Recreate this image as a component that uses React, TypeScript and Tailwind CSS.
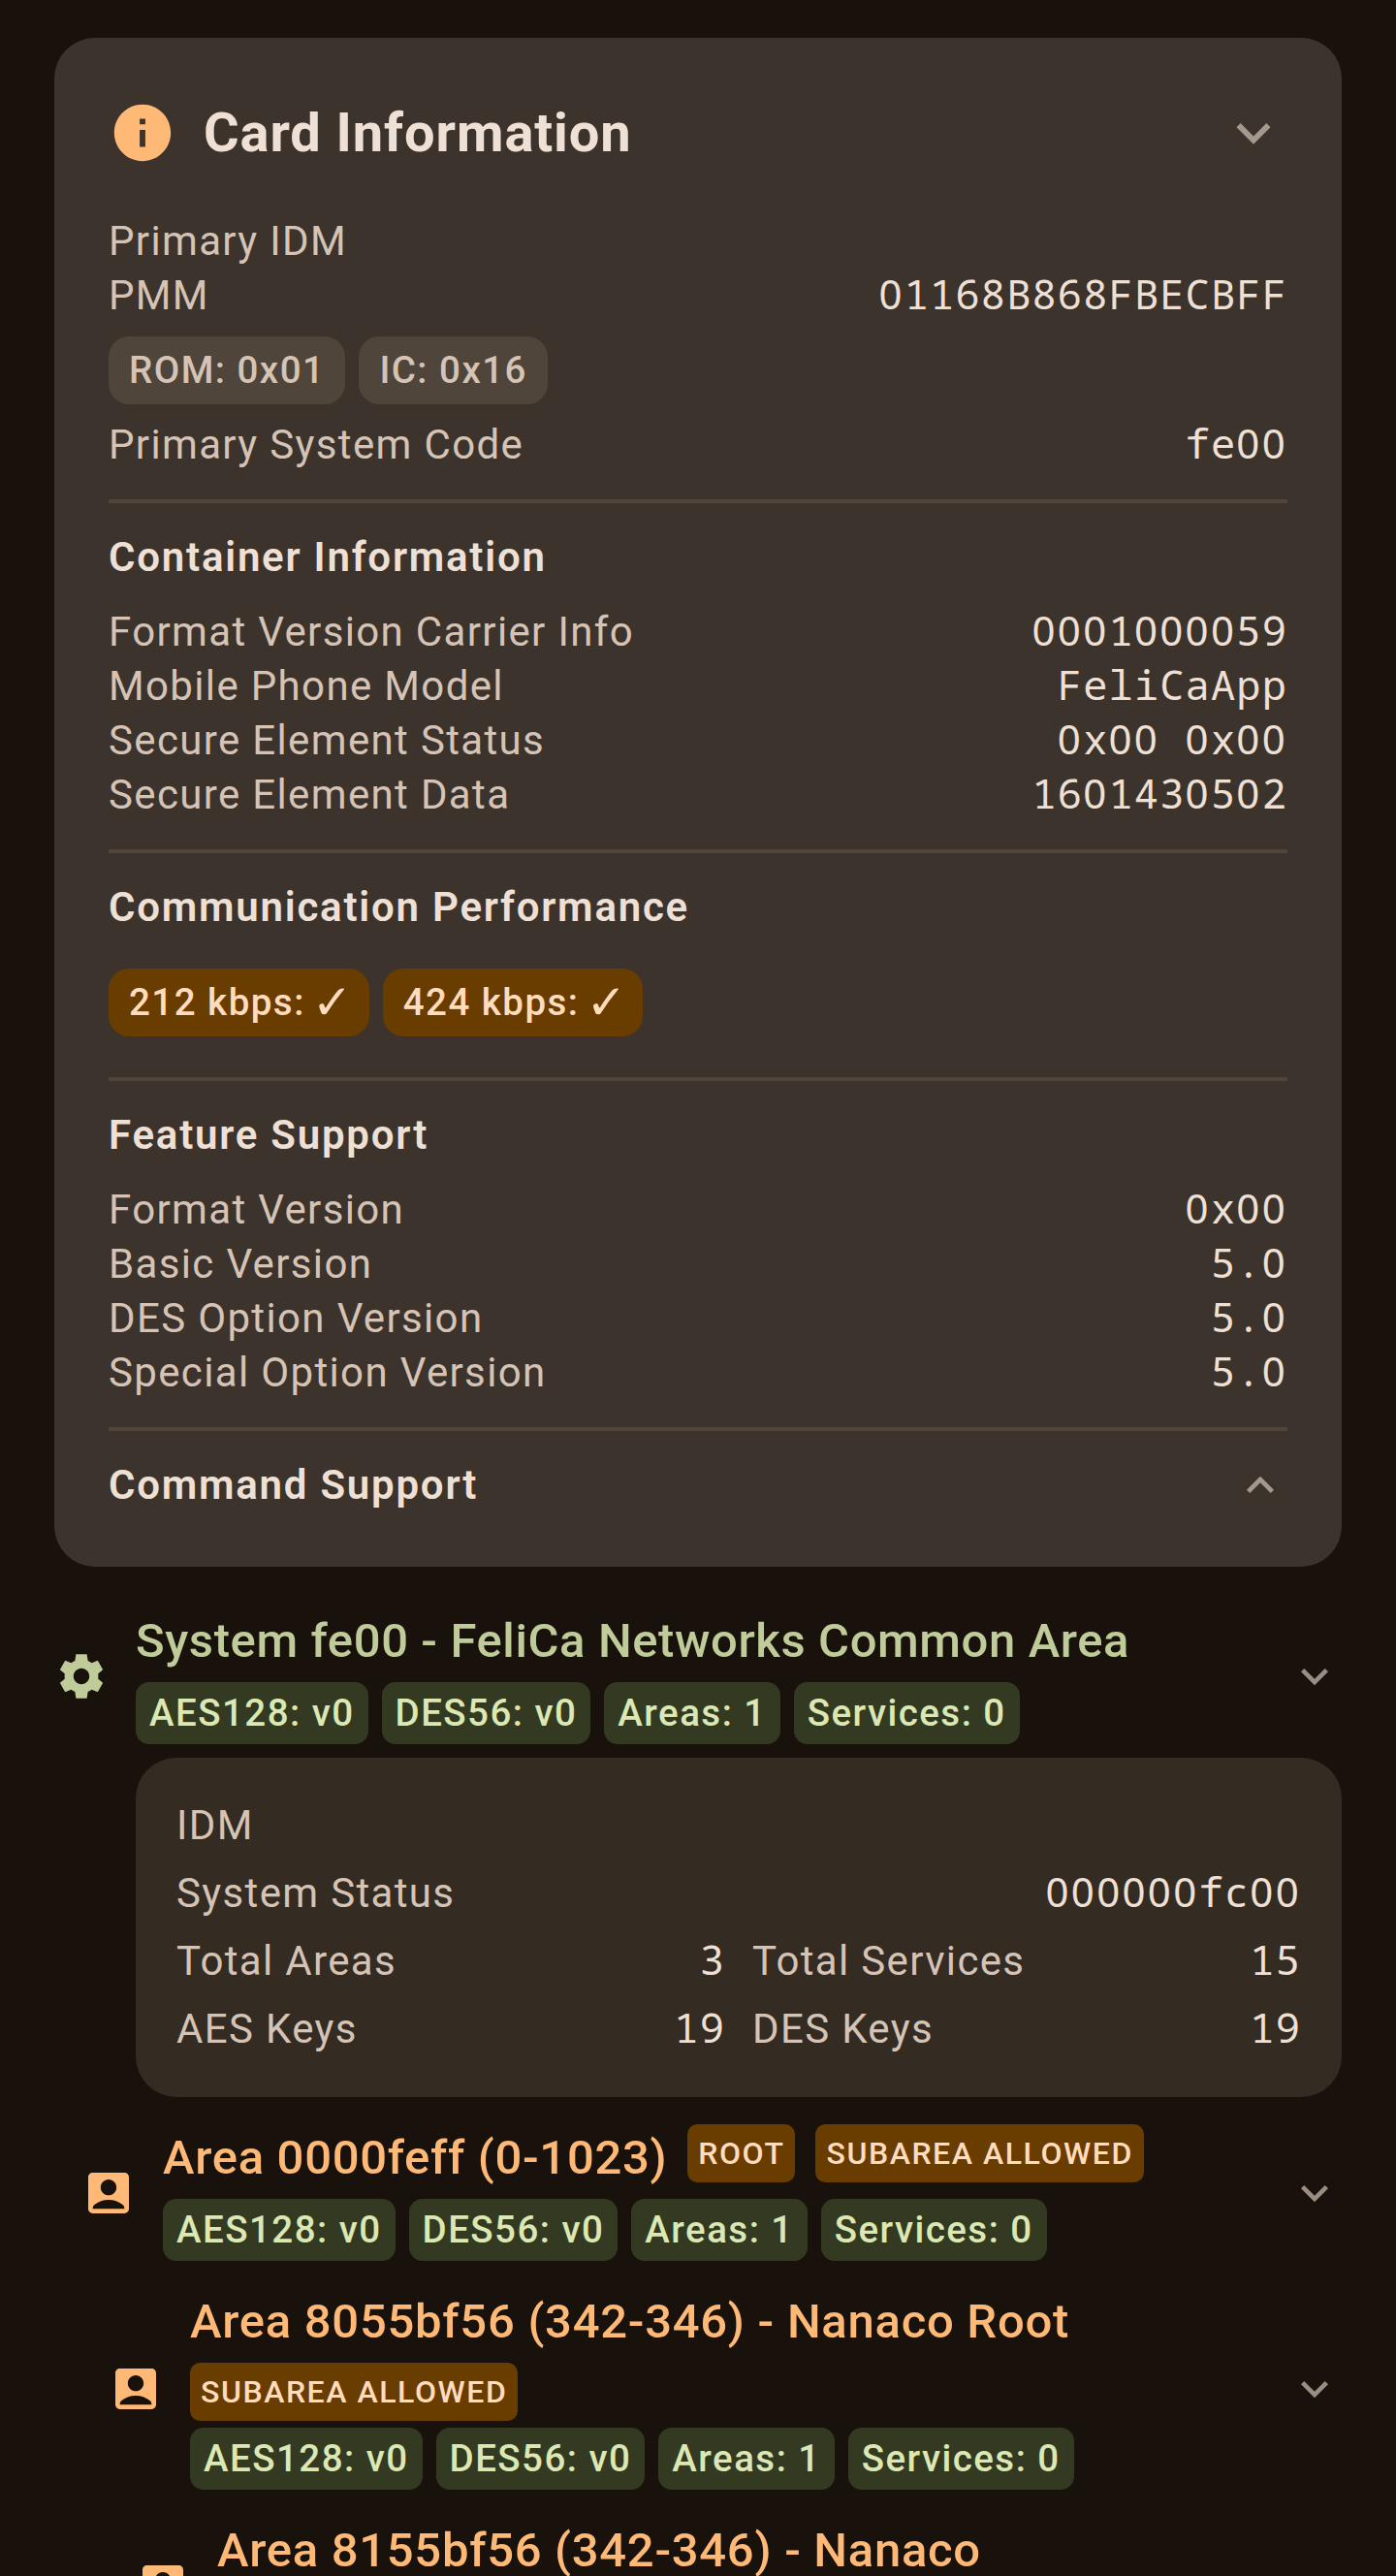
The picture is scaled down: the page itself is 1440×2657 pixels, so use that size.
import React from "react";
import { ReactNode } from "react";

type IconProps = { className: string; d: string };

const ICONS = {
  info: "M12 2C6.48 2 2 6.48 2 12s4.48 10 10 10 10-4.48 10-10S17.52 2 12 2zm1 15h-2v-6h2v6zm0-8h-2V7h2v2z",
  down: "M16.59 8.59 12 13.17 7.41 8.59 6 10l6 6 6-6z",
  up: "M12 8l-6 6 1.41 1.41L12 10.83l4.59 4.58L18 14z",
  gear: "M9.6 2.2h4.8l.45 2.9q.85.4 1.65 1l2.7-1.1 2.3 4.1-2.1 1.7q.1 1.2 0 2.4l2.1 1.7-2.3 4.1-2.7-1.1q-.8.6-1.65 1l-.45 2.9H9.6l-.45-2.9q-.85-.4-1.65-1l-2.7 1.1-2.3-4.1 2.1-1.7q-.1-1.2 0-2.4L2.5 9.1 4.8 5l2.7 1.1q.8-.6 1.65-1zM12 15.5c1.93 0 3.5-1.57 3.5-3.5S13.93 8.5 12 8.5 8.5 10.07 8.5 12s1.57 3.5 3.5 3.5z",
  person:
    "M19 3H5c-1.11 0-2 .9-2 2v14c0 1.1.89 2 2 2h14c1.1 0 2-.9 2-2V5c0-1.1-.9-2-2-2zm-7 3c1.93 0 3.5 1.57 3.5 3.5S13.93 13 12 13s-3.5-1.57-3.5-3.5S10.07 6 12 6zm7 13H5v-.23c0-.62.28-1.2.76-1.58C7.47 15.82 9.64 15 12 15s4.53.82 6.24 2.19c.48.38.76.97.76 1.58V19z",
};

function Icon({ className, d }: IconProps) {
  return (
    <svg viewBox="0 0 24 24" className={`shrink-0 ${className}`} fill="currentColor" fillRule="evenodd">
      <path d={d} />
    </svg>
  );
}

/* Monospaced value; zeros use the proportional face so that they stay unslashed. */
function Value({ text }: { text: string }) {
  return (
    <span className="whitespace-pre text-[42px] leading-[52px] tracking-[1.15px] text-[#EFE0D5] [font-family:'Noto_Sans_Mono',monospace]">
      {text.split(/(0+)/).map((run, i) =>
        run.startsWith("0") ? (
          <span key={i} className="tracking-[2.33px] [font-family:'Noto_Sans',sans-serif]">
            {run}
          </span>
        ) : (
          run
        ),
      )}
    </span>
  );
}

function Row({ label, value }: { label: string; value?: string }) {
  return (
    <div className="flex h-[56px] flex-1 items-baseline justify-between">
      <span className="text-[42px] leading-[56px] tracking-[1.35px] text-[#D5C3B5]">{label}</span>
      {value && <Value text={value} />}
    </div>
  );
}

function Divider({ className }: { className: string }) {
  return <div className={`h-[4px] bg-[#4F453A] ${className}`} />;
}

function Heading({ children }: { children: ReactNode }) {
  return (
    <h3 className="text-[42px] font-semibold leading-[56px] tracking-[1.77px] text-[#EFE0D5]">{children}</h3>
  );
}

function InfoChip({ tone, children }: { tone: string; children: ReactNode }) {
  return (
    <span
      className={`h-[70px] whitespace-pre rounded-[21px] px-[21px] pt-[7px] text-[38.5px] font-medium leading-[56px] tracking-[1.47px] ${tone}`}
    >
      {children}
    </span>
  );
}

function Check() {
  return (
    <span className="-ml-[4px] -mr-[4px] align-[-4px] text-[50px] font-normal leading-[44px] tracking-normal [font-family:'DejaVu_Sans',sans-serif]">
      ✓
    </span>
  );
}

function Stats() {
  return (
    <div className="flex gap-[14px]">
      {["AES128: v0", "DES56: v0", "Areas: 1", "Services: 0"].map((s) => (
        <span
          key={s}
          className="h-[64px] whitespace-nowrap rounded-[14px] bg-[#343921] px-[14px] pt-[4px] text-[38.5px] font-medium leading-[56px] tracking-[1.46px] text-[#DBE8B4]"
        >
          {s}
        </span>
      ))}
    </div>
  );
}

function Badge({ children }: { children: ReactNode }) {
  return (
    <span className="h-[60px] whitespace-nowrap rounded-[10.5px] bg-[#693C00] px-[11px] pt-[2px] text-[32px] font-medium leading-[56px] tracking-[1.55px] text-[#FFDCBE]">
      {children}
    </span>
  );
}

function Title({ className, children }: { className: string; children: ReactNode }) {
  return (
    <h2 className={`whitespace-nowrap text-[49px] font-medium leading-[70px] ${className}`}>
      {children}
    </h2>
  );
}

function TreeItem({
  icon,
  color,
  indent,
  children,
}: {
  icon: string;
  color: string;
  indent: string;
  children: ReactNode;
}) {
  return (
    <div className={`flex items-center ${color} ${indent}`}>
      <Icon className="mr-[28px] size-[56px]" d={icon} />
      <div className="flex min-w-0 flex-1 flex-col">{children}</div>
      <Icon className="size-[56px] text-[#9A8E83]" d={ICONS.down} />
    </div>
  );
}

export default function App() {
  return (
    <div className="h-[2657px] w-[1440px] overflow-hidden bg-[#19120C] px-[56px] pt-[39px] [font-family:Roboto,sans-serif]">
      <section className="h-[1577px] rounded-[42px] bg-[#3C332D] px-[56px] pt-[56px]">
        <header className="flex h-[84px] items-center">
          <Icon className="size-[70px] text-[#FDB975]" d={ICONS.info} />
          <h1 className="ml-[28px] flex-1 text-[56px] font-bold leading-[84px] tracking-[0.9px] text-[#EFE0D5]">
            Card Information
          </h1>
          <Icon className="size-[70px] text-[#A4998D]" d={ICONS.down} />
        </header>

        <div className="mt-[42px]">
          <Row label="Primary IDM" />
          <Row label="PMM" value="01168B868FBECBFF" />
          <div className="my-[14px] flex gap-[14px]">
            <InfoChip tone="bg-[#4F453A] text-[#D5C3B5]">ROM: 0x01</InfoChip>
            <InfoChip tone="bg-[#4F453A] text-[#D5C3B5]">IC: 0x16</InfoChip>
          </div>
          <Row label="Primary System Code" value="fe00" />
        </div>

        <Divider className="my-[28px]" />
        <Heading>Container Information</Heading>
        <div className="mt-[21px]">
          <Row label="Format Version Carrier Info" value="0001000059" />
          <Row label="Mobile Phone Model" value="FeliCaApp" />
          <Row label="Secure Element Status" value="0x00 0x00" />
          <Row label="Secure Element Data" value="1601430502" />
        </div>

        <Divider className="my-[28px]" />
        <Heading>Communication Performance</Heading>
        <div className="mt-[35px] flex gap-[14px]">
          <InfoChip tone="bg-[#693C00] text-[#FFDCBE]">
            212 kbps: <Check />
          </InfoChip>
          <InfoChip tone="bg-[#693C00] text-[#FFDCBE]">
            424 kbps: <Check />
          </InfoChip>
        </div>

        <Divider className="mb-[28px] mt-[42px]" />
        <Heading>Feature Support</Heading>
        <div className="mt-[21px]">
          <Row label="Format Version" value="0x00" />
          <Row label="Basic Version" value="5.0" />
          <Row label="DES Option Version" value="5.0" />
          <Row label="Special Option Version" value="5.0" />
        </div>

        <Divider className="my-[28px]" />
        <div className="flex items-center justify-between">
          <Heading>Command Support</Heading>
          <Icon className="size-[56px] text-[#A4998D]" d={ICONS.up} />
        </div>
      </section>

      <div className="mt-[42px]">
        <TreeItem icon={ICONS.gear} color="text-[#BFCC9A]" indent="">
          <Title className="tracking-[0.6px]">System fe00 - FeliCa Networks Common Area</Title>
          <div className="mt-[7px]">
            <Stats />
          </div>
        </TreeItem>

        <section className="ml-[84px] mt-[14px] flex h-[350px] flex-col gap-[14px] rounded-[42px] bg-[#342B23] px-[42px] pt-[42px]">
          <div className="flex">
            <Row label="IDM" />
          </div>
          <div className="flex">
            <Row label="System Status" value="000000fc00" />
          </div>
          <div className="flex gap-[28px]">
            <Row label="Total Areas" value="3" />
            <Row label="Total Services" value="15" />
          </div>
          <div className="flex gap-[28px]">
            <Row label="AES Keys" value="19" />
            <Row label="DES Keys" value="19" />
          </div>
        </section>
      </div>

      <div className="mt-[28px] flex flex-col">
        <TreeItem icon={ICONS.person} color="text-[#FDB975]" indent="ml-[28px]">
          <div className="flex items-start gap-[21px]">
            <Title className="tracking-[0.68px]">Area 0000feff (0-1023)</Title>
            <Badge>ROOT</Badge>
            <Badge>SUBAREA ALLOWED</Badge>
          </div>
          <div className="mt-[7px]">
            <Stats />
          </div>
        </TreeItem>
        <TreeItem icon={ICONS.person} color="text-[#FDB975]" indent="ml-[56px] mt-[28px]">
          <Title className="tracking-[0.72px]">Area 8055bf56 (342-346) - Nanaco Root</Title>
          <div className="mt-[7px] flex">
            <Badge>SUBAREA ALLOWED</Badge>
          </div>
          <div className="mt-[7px]">
            <Stats />
          </div>
        </TreeItem>
        <TreeItem icon={ICONS.person} color="text-[#FDB975]" indent="ml-[84px] mt-[28px]">
          <Title className="tracking-[0.7px]">Area 8155bf56 (342-346) - Nanaco</Title>
          <div className="h-[72px]" />
        </TreeItem>
      </div>
    </div>
  );
}
